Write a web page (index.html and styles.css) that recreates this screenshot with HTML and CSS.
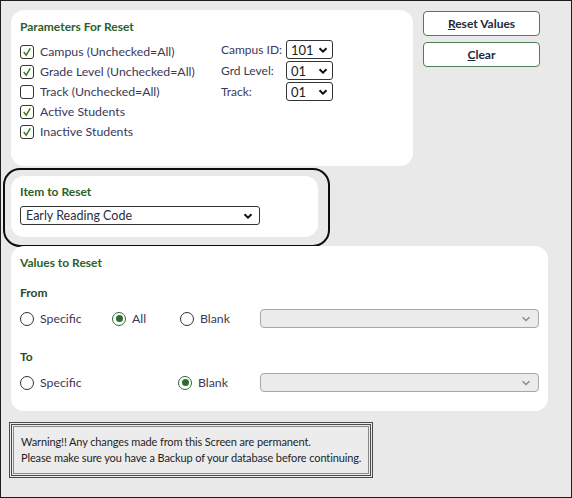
FILE: index.html
```html
<!DOCTYPE html>
<html>
<head>
<meta charset="utf-8">
<link rel="stylesheet" href="styles.css">
</head>
<body>
<div class="frame">
  <div class="top-row">
    <section class="panel params">
      <h2 class="title">Parameters For Reset</h2>
      <div class="params-body">
        <div class="checks">
          <label class="row"><span class="cb checked"><svg viewBox="0 0 13 13"><path d="M3 6.5 L5.6 10 L10 2.5" /></svg></span>Campus (Unchecked=All)</label>
          <label class="row"><span class="cb checked"><svg viewBox="0 0 13 13"><path d="M3 6.5 L5.6 10 L10 2.5" /></svg></span>Grade Level (Unchecked=All)</label>
          <label class="row"><span class="cb"></span>Track (Unchecked=All)</label>
          <label class="row"><span class="cb checked"><svg viewBox="0 0 13 13"><path d="M3 6.5 L5.6 10 L10 2.5" /></svg></span>Active Students</label>
          <label class="row"><span class="cb checked"><svg viewBox="0 0 13 13"><path d="M3 6.5 L5.6 10 L10 2.5" /></svg></span>Inactive Students</label>
        </div>
        <div class="fields">
          <div class="field"><span class="flabel">Campus ID:</span><span class="sel small"><span>101</span><svg class="chev" viewBox="0 0 10 6"><path d="M1.5 1.2 L5 4.6 L8.5 1.2"/></svg></span></div>
          <div class="field"><span class="flabel">Grd Level:</span><span class="sel small"><span>01</span><svg class="chev" viewBox="0 0 10 6"><path d="M1.5 1.2 L5 4.6 L8.5 1.2"/></svg></span></div>
          <div class="field"><span class="flabel">Track:</span><span class="sel small"><span>01</span><svg class="chev" viewBox="0 0 10 6"><path d="M1.5 1.2 L5 4.6 L8.5 1.2"/></svg></span></div>
        </div>
      </div>
    </section>
    <div class="buttons">
      <button class="btn"><u>R</u>eset Values</button>
      <button class="btn"><u>C</u>lear</button>
    </div>
  </div>

  <div class="highlight">
    <section class="panel item">
      <h2 class="title">Item to Reset</h2>
      <span class="sel wide"><span>Early Reading Code</span><svg class="chev" viewBox="0 0 10 6"><path d="M1.5 1.2 L5 4.6 L8.5 1.2"/></svg></span>
    </section>
  </div>

  <section class="panel values">
    <h2 class="title">Values to Reset</h2>
    <h3 class="sub from">From</h3>
    <div class="radio-row">
      <label class="radio r-spec"><span class="rb"></span>Specific</label>
      <label class="radio r-all"><span class="rb on"></span>All</label>
      <label class="radio r-blank"><span class="rb"></span>Blank</label>
      <span class="sel disabled"><svg class="chev" viewBox="0 0 10 6"><path d="M1.5 1.2 L5 4.6 L8.5 1.2"/></svg></span>
    </div>
    <h3 class="sub to">To</h3>
    <div class="radio-row">
      <label class="radio r-spec2"><span class="rb"></span>Specific</label>
      <label class="radio r-blank2"><span class="rb on"></span>Blank</label>
      <span class="sel disabled"><svg class="chev" viewBox="0 0 10 6"><path d="M1.5 1.2 L5 4.6 L8.5 1.2"/></svg></span>
    </div>
  </section>

  <div class="warning">
    <p>Warning!! Any changes made from this Screen are permanent.</p>
    <p>Please make sure you have a Backup of your database before continuing.</p>
  </div>
</div>
</body>
</html>
```

FILE: styles.css
```css
* { box-sizing: border-box; }
html, body { margin: 0; padding: 0; }
body {
  font-family: Lato, "Open Sans", sans-serif;
  font-size: 12px;
  color: #3a3858;
}
.frame {
  width: 572px;
  height: 498px;
  border: 1px solid #1e1e1e;
  background: #e9e9e9;
  padding: 9px 0 0 10px;
}
.top-row {
  display: flex;
  gap: 10px;
  align-items: flex-start;
}
.panel {
  background: #fff;
  border-radius: 13px;
}
.title {
  margin: 0;
  font-size: 12px;
  font-weight: 700;
  color: #2b612b;
  line-height: 16px;
}
.params {
  width: 402px;
  height: 156px;
  padding: 9px 9px 0 9px;
}
.params-body {
  display: flex;
  margin-top: 7px;
}
.checks {
  width: 201px;
  display: flex;
  flex-direction: column;
}
.row {
  display: flex;
  align-items: center;
  height: 20px;
  line-height: 16px;
  font-size: 12.3px;
}
.cb {
  width: 14px;
  height: 14px;
  border: 1.3px solid #333;
  border-radius: 3px;
  margin-right: 6px;
  display: inline-flex;
  flex: none;
}
.cb svg { width: 100%; height: 100%; }
.cb path { fill: none; stroke: #3c7a14; stroke-width: 1.6; }
.fields {
  display: flex;
  flex-direction: column;
  gap: 2px;
  margin-top: -2px;
}
.field {
  display: flex;
  align-items: center;
  height: 19px;
}
.flabel { width: 65px; }
.sel {
  display: flex;
  align-items: center;
  justify-content: space-between;
  height: 19px;
  border: 1.3px solid #333;
  border-radius: 3px;
  background: #fff;
  color: #222;
  font-size: 13px;
  padding: 0 4px 0 4px;
}
.sel.small { width: 47px; }
.chev { width: 10px; height: 6px; }
.chev path { fill: none; stroke: #111; stroke-width: 2; }
.buttons {
  display: flex;
  flex-direction: column;
  gap: 6px;
  padding-top: 1px;
}
.btn {
  width: 117px;
  height: 25px;
  background: #fff;
  border: 1.3px solid #4e7f52;
  border-radius: 4px;
  font-family: inherit;
  font-size: 12px;
  font-weight: 700;
  color: #1e2a3c;
  padding: 0;
}
.highlight {
  width: 327px;
  margin: 2px 0 0 -8px;
  border: 2px solid #0d0d0d;
  border-radius: 17px;
  padding: 6px 10px 8px 6px;
}
.item {
  height: 61px;
  padding: 8px 9px 0 9px;
}
.sel.wide {
  width: 240px;
  margin-top: 6px;
  padding: 0 6px 0 5px;
  font-size: 12.5px;
  color: #2c2c44;
}
.values {
  width: 537px;
  height: 165px;
  margin-top: -1px;
  padding: 9px 9px 0 9px;
}
.sub {
  margin: 0;
  font-size: 12px;
  font-weight: 700;
  color: #2b4a2b;
  line-height: 16px;
}
.sub.from { margin-top: 14px; }
.sub.to { margin-top: 21px; }
.radio-row {
  display: flex;
  align-items: center;
  margin-top: 8px;
  height: 19px;
}
.radio {
  display: flex;
  align-items: center;
  font-size: 12.3px;
}
.rb {
  width: 14px;
  height: 14px;
  border: 1.3px solid #333;
  border-radius: 50%;
  margin-right: 6px;
  flex: none;
  display: inline-flex;
  align-items: center;
  justify-content: center;
}
.rb.on { border-color: #2e6b2e; border-width: 1.6px; }
.rb.on::after {
  content: "";
  width: 7px;
  height: 7px;
  border-radius: 50%;
  background: #2e6b2e;
}
.r-spec { width: 92px; }
.r-all { width: 68px; }
.r-blank { width: 80px; }
.r-spec2 { width: 158px; }
.r-blank2 { width: 82px; }
.sel.disabled {
  width: 279px;
  background: #ececec;
  border: 1px solid #a8a8a8;
  border-radius: 4px;
  justify-content: flex-end;
  padding-right: 7px;
}
.sel.disabled .chev path { stroke: #8a8a8a; stroke-width: 1.4; }
.warning {
  width: 364px;
  height: 56px;
  margin: 11px 0 0 -2px;
  border: 3px double #4a4a4a;
  outline: 1px solid #8a8a8a;
  outline-offset: -5px;
  background: #ececec;
  padding: 9px 0 0 9px;
  font-size: 11px;
  letter-spacing: -0.12px;
  color: #1e1e1e;
}
.warning p { margin: 0; line-height: 16px; white-space: nowrap; }
```
